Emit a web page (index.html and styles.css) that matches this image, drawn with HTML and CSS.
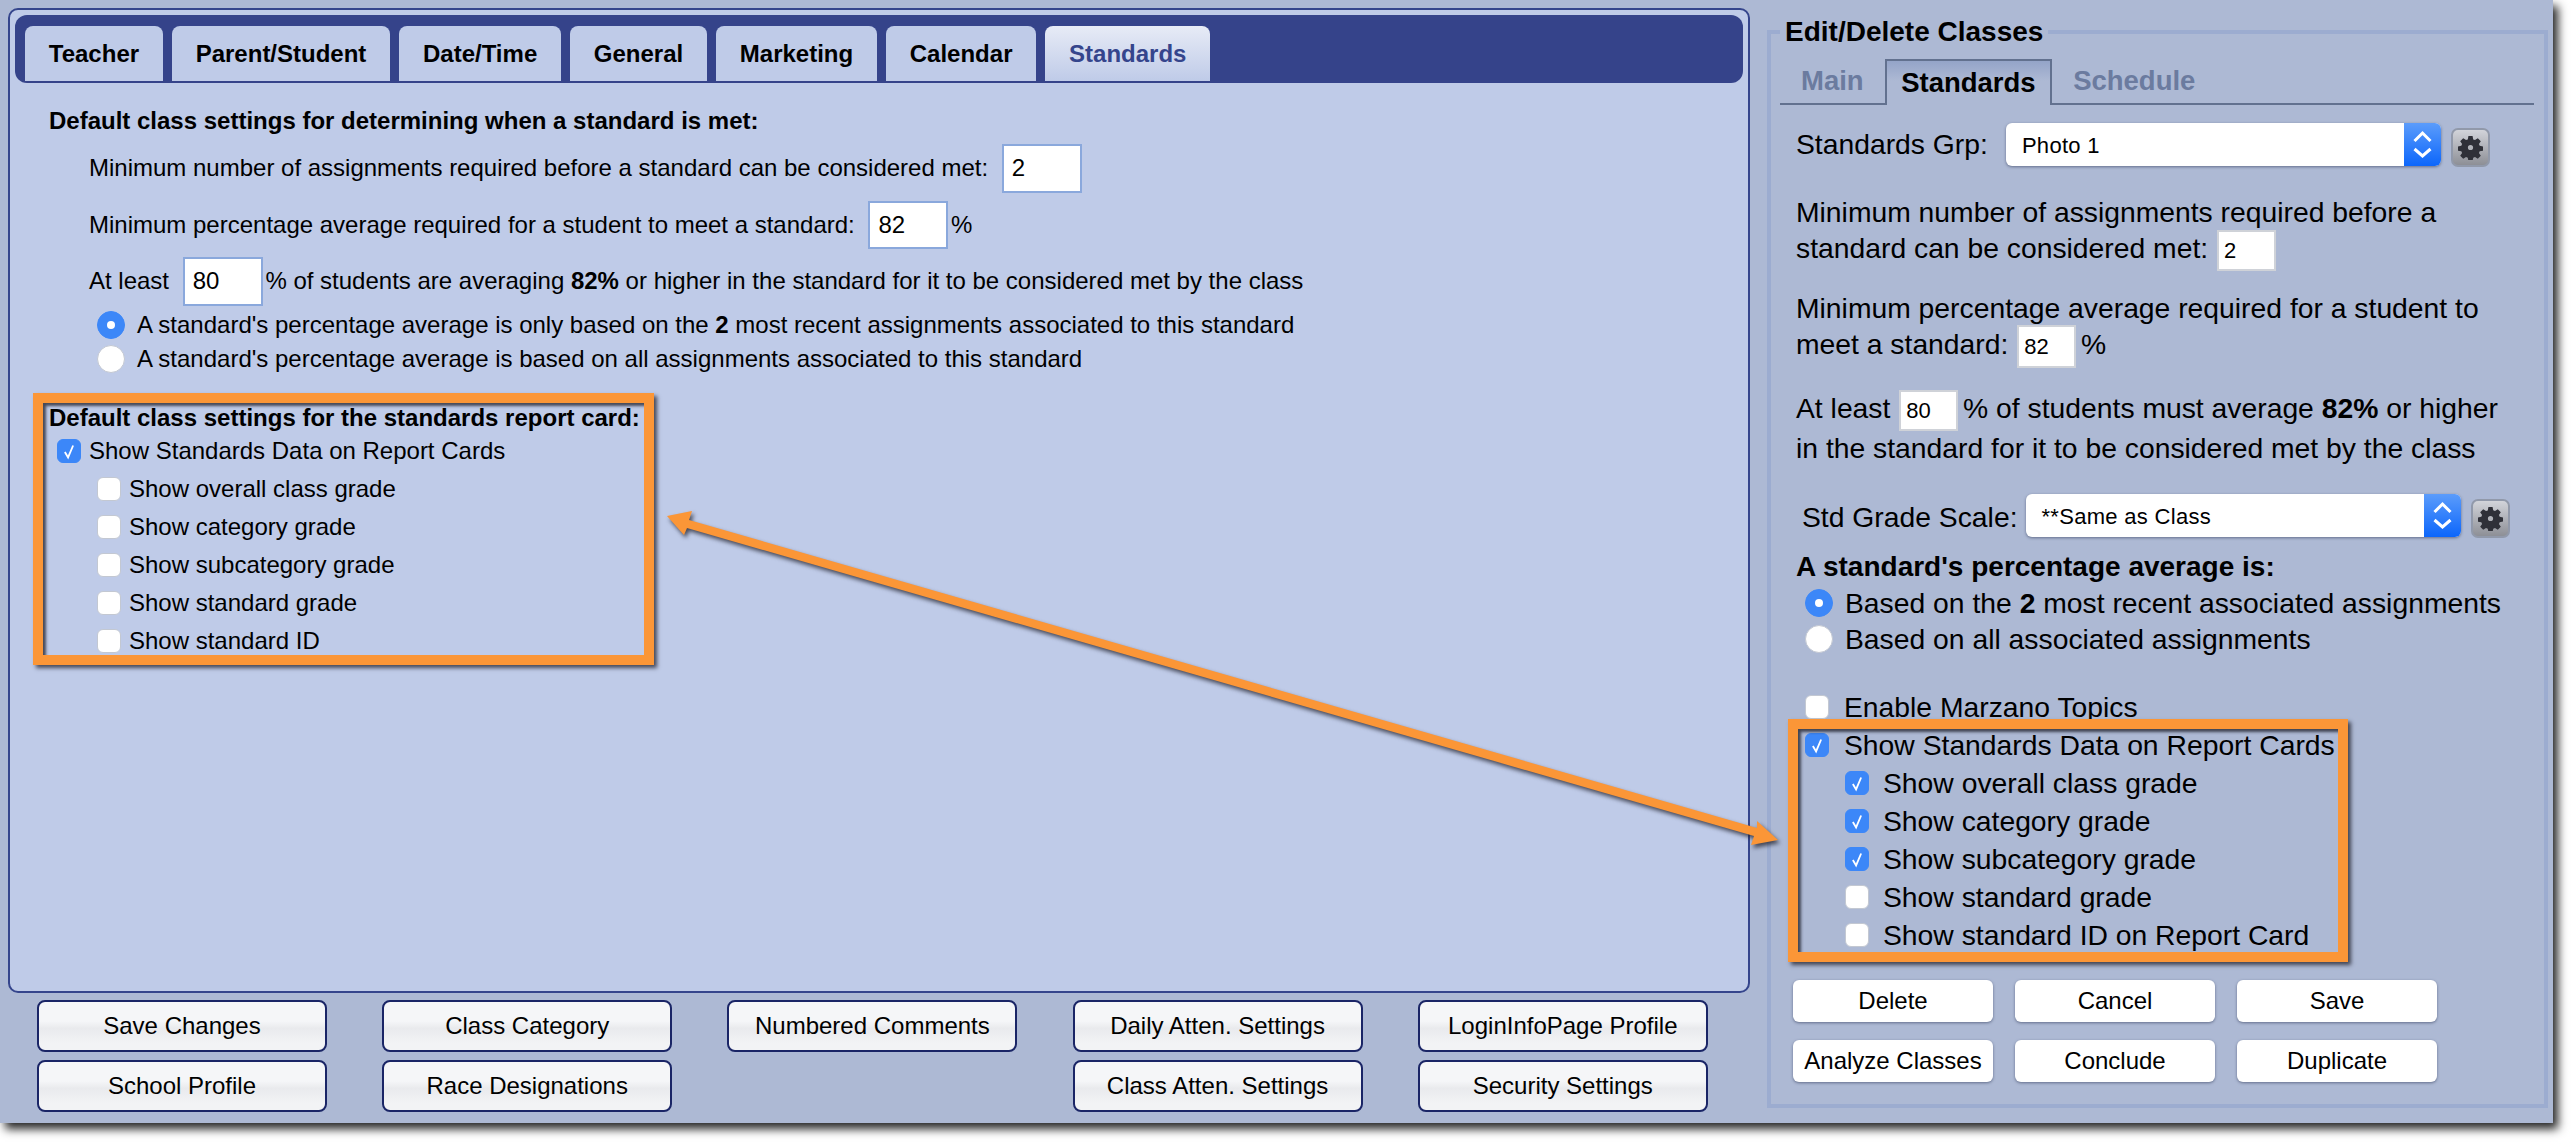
FILE: index.html
```html
<!DOCTYPE html>
<html lang="en">
<head>
<meta charset="utf-8">
<title>Standards settings</title>
<link rel="stylesheet" href="styles.css">
</head>
<body>
<div class="window">
  <div class="left-col">
    <section class="panel">
      <nav class="tabbar">
        <span class="tab">Teacher</span>
        <span class="tab">Parent/Student</span>
        <span class="tab">Date/Time</span>
        <span class="tab">General</span>
        <span class="tab">Marketing</span>
        <span class="tab">Calendar</span>
        <span class="tab tab-active">Standards</span>
      </nav>
      <div class="settings">
        <h3 class="heading">Default class settings for determining when a standard is met:</h3>
        <div class="met-row">Minimum number of assignments required before a standard can be considered met: <input class="num" value="2"></div>
        <div class="met-row">Minimum percentage average required for a student to meet a standard: <input class="num" value="82"> %</div>
        <div class="met-row">At least <input class="num" value="80"> % of students are averaging <b>82%</b> or higher in the standard for it to be considered met by the class</div>
        <div class="radio-row first"><span class="radio on"></span>A standard's percentage average is only based on the <b>2</b> most recent assignments associated to this standard</div>
        <div class="radio-row"><span class="radio"></span>A standard's percentage average is based on all assignments associated to this standard</div>
        <div class="report">
          <h3 class="heading">Default class settings for the standards report card:</h3>
          <div class="checks">
            <div class="check-row"><span class="check on"><svg viewBox="0 0 24 24"><path d="M7.500 13 L11 19 L16.500 6"/></svg></span>Show Standards Data on Report Cards</div>
            <div class="check-row sub"><span class="check"></span>Show overall class grade</div>
            <div class="check-row sub"><span class="check"></span>Show category grade</div>
            <div class="check-row sub"><span class="check"></span>Show subcategory grade</div>
            <div class="check-row sub"><span class="check"></span>Show standard grade</div>
            <div class="check-row sub"><span class="check"></span>Show standard ID</div>
          </div>
        </div>
      </div>
    </section>
    <div class="actions">
      <button class="action">Save Changes</button>
      <button class="action">Class Category</button>
      <button class="action">Numbered Comments</button>
      <button class="action">Daily Atten. Settings</button>
      <button class="action">LoginInfoPage Profile</button>
      <button class="action">School Profile</button>
      <button class="action">Race Designations</button>
      <span></span>
      <button class="action">Class Atten. Settings</button>
      <button class="action">Security Settings</button>
    </div>
  </div>

  <fieldset class="editor">
    <legend>Edit/Delete Classes</legend>
    <nav class="subtabs">
      <span class="subtab">Main</span>
      <span class="subtab subtab-active">Standards</span>
      <span class="subtab">Schedule</span>
    </nav>
    <div class="editor-body">
      <div class="select-row">
        <span class="select-label">Standards Grp:</span>
        <div class="select grp"><span class="select-text">Photo 1</span><span class="stepper"><svg viewBox="0 0 37 43"><path d="M10.500 18 L18.500 10 L26.500 18 M10.500 26 L18.500 33 L26.500 26"/></svg></span></div>
        <span class="gear"><svg viewBox="0 0 24 24"><path d="M10 1h4l.6 3.200 1.700.7 2.700-1.800 2.900 2.900-1.800 2.700.7 1.700 3.200.6v4l-3.200.6-.7 1.700 1.800 2.700-2.900 2.900-2.700-1.800-1.700.7-.6 3.200h-4l-.6-3.200-1.700-.7-2.700 1.800-2.900-2.900 1.800-2.700-.7-1.700-3.200-.6v-4l3.200-.6.7-1.700-1.800-2.700 2.900-2.900 2.700 1.800 1.700-.7z M12 9.500a2.500 2.500 0 1 0 0 5 2.500 2.500 0 1 0 0-5z" fill-rule="evenodd"/></svg></span>
      </div>
      <p class="para p1">Minimum number of assignments required before a standard can be considered met: <input class="mini" value="2"></p>
      <p class="para p2">Minimum percentage average required for a student to meet a standard: <input class="mini tall" value="82"> %</p>
      <p class="para p3">At least <input class="mini" value="80"> % of students must average <b>82%</b> or higher in the standard for it to be considered met by the class</p>
      <div class="select-row scale">
        <span class="select-label">Std Grade Scale:</span>
        <div class="select std"><span class="select-text">**Same as Class</span><span class="stepper"><svg viewBox="0 0 37 43"><path d="M10.500 18 L18.500 10 L26.500 18 M10.500 26 L18.500 33 L26.500 26"/></svg></span></div>
        <span class="gear"><svg viewBox="0 0 24 24"><path d="M10 1h4l.6 3.200 1.700.7 2.700-1.800 2.900 2.900-1.800 2.700.7 1.700 3.200.6v4l-3.200.6-.7 1.700 1.800 2.700-2.900 2.900-2.700-1.800-1.700.7-.6 3.200h-4l-.6-3.200-1.700-.7-2.700 1.800-2.900-2.900 1.800-2.700-.7-1.700-3.200-.6v-4l3.200-.6.7-1.700-1.800-2.700 2.900-2.900 2.700 1.800 1.700-.7z M12 9.500a2.500 2.500 0 1 0 0 5 2.500 2.500 0 1 0 0-5z" fill-rule="evenodd"/></svg></span>
      </div>
      <h3 class="avg-heading">A standard's percentage average is:</h3>
      <div class="avg-row"><span class="radio on"></span>Based on the <b>2</b> most recent associated assignments</div>
      <div class="avg-row"><span class="radio"></span>Based on all associated assignments</div>
      <div class="checks editor-checks">
        <div class="check-row"><span class="check"></span>Enable Marzano Topics</div>
        <div class="check-row"><span class="check on"><svg viewBox="0 0 24 24"><path d="M7.500 13 L11 19 L16.500 6"/></svg></span>Show Standards Data on Report Cards</div>
        <div class="check-row sub"><span class="check on"><svg viewBox="0 0 24 24"><path d="M7.500 13 L11 19 L16.500 6"/></svg></span>Show overall class grade</div>
        <div class="check-row sub"><span class="check on"><svg viewBox="0 0 24 24"><path d="M7.500 13 L11 19 L16.500 6"/></svg></span>Show category grade</div>
        <div class="check-row sub"><span class="check on"><svg viewBox="0 0 24 24"><path d="M7.500 13 L11 19 L16.500 6"/></svg></span>Show subcategory grade</div>
        <div class="check-row sub"><span class="check"></span>Show standard grade</div>
        <div class="check-row sub"><span class="check"></span>Show standard ID on Report Card</div>
      </div>
      <div class="editor-buttons">
        <button class="plain">Delete</button>
        <button class="plain">Cancel</button>
        <button class="plain">Save</button>
        <button class="plain">Analyze Classes</button>
        <button class="plain">Conclude</button>
        <button class="plain">Duplicate</button>
      </div>
    </div>
  </fieldset>

  <div class="frame frame-left"></div>
  <div class="frame frame-right"></div>
  <svg class="arrow" viewBox="0 0 2573 1143" aria-hidden="true">
    <polygon points="667,516 692,511 689,520 1757,828 1757,821 1778,840 1751,845 1754,836 687,528 684,535"/>
  </svg>
</div>
</body>
</html>
```
FILE: styles.css
```css
* { box-sizing: border-box; }
html, body { margin: 0; padding: 0; background: #fff; }
body {
  width: 2573px;
  height: 1143px;
  overflow: hidden;
  font-family: "Liberation Sans", Arial, sans-serif;
  color: #000;
}
.window {
  position: relative;
  display: flex;
  align-items: flex-start;
  width: 2553px;
  height: 1123px;
  background: #adb9d4;
  box-shadow: 5px 6px 9px rgba(0, 0, 0, .85);
}
.left-col {
  width: 1750px;
  padding: 8px 0 0 8px;
  flex: none;
}
.panel {
  height: 985px;
  background: #bfcbe8;
  border: 2px solid #35458c;
  border-radius: 10px;
}
.tabbar {
  display: flex;
  gap: 9px;
  height: 68px;
  margin: 5px 5px 0;
  padding: 11px 10px 2px;
  background: #35438a;
  border-radius: 12px;
}
.tab {
  padding: 0 23.800px;
  height: 55px;
  line-height: 55px;
  font-size: 24px;
  font-weight: 700;
  background: #bfcbe8;
  border-radius: 8px 8px 0 0;
}
.tab-active {
  color: #35458c;
  background: linear-gradient(#e7ebf6, #bfcbe8);
}
.settings {
  padding: 23px 0 0 39px;
  font-size: 24px;
}
.heading {
  margin: 0;
  height: 30px;
  line-height: 30px;
  font-size: 24px;
  font-weight: 700;
}
.met-row {
  display: flex;
  align-items: center;
  white-space: pre;
  height: 48.500px;
  margin: 8px 0 0 40px;
}
.met-row + .met-row { margin-top: 8px; }
.num {
  width: 80px;
  height: 100%;
  margin: 0 -4px 0 7px;
  padding: 0 8px;
  font: 24px "Liberation Sans", Arial, sans-serif;
  background: #fff;
  border: 2px solid #8aa8dc;
  border-radius: 0;
  outline: 0;
}
.radio-row {
  display: flex;
  align-items: center;
  white-space: pre;
  height: 28px;
  margin: 6px 0 0 48px;
}
.radio-row.first { margin-top: 5.500px; }
.radio {
  flex: none;
  position: relative;
  width: 28px;
  height: 28px;
  margin-right: 12px;
  background: #fff;
  border: 1px solid #c3c8d2;
  border-radius: 50%;
}
.radio.on {
  background: #3c87f8;
  border-color: #3c87f8;
}
.radio.on::after {
  content: "";
  position: absolute;
  left: 9px;
  top: 9px;
  width: 8px;
  height: 8px;
  background: #fff;
  border-radius: 50%;
}
.report { margin: 30px 0 0; }
.checks {
  display: flex;
  flex-direction: column;
  gap: 14px;
  margin-top: 6px;
}
.check-row {
  display: flex;
  align-items: center;
  height: 24px;
  padding-left: 8px;
  white-space: pre;
}
.check-row.sub { padding-left: 48px; }
.check {
  flex: none;
  width: 24px;
  height: 24px;
  margin-right: 8px;
  background: #fff;
  border: 1px solid #c3c8d2;
  border-radius: 6px;
}
.check.on {
  background: #3c87f8;
  border-color: #3c87f8;
}
.check svg {
  display: block;
  width: 22px;
  height: 22px;
  fill: none;
  stroke: #fff;
  stroke-width: 2;
}
.actions {
  display: grid;
  grid-template-columns: repeat(5, 290px);
  grid-auto-rows: 52px;
  column-gap: 55.200px;
  row-gap: 8px;
  margin: 7px 0 0 29px;
}
.action {
  font: 24px "Liberation Sans", Arial, sans-serif;
  color: #000;
  padding: 0;
  background: linear-gradient(#f5f6f8 0 40%, #e9eaed 55%, #f2f3f5 85%);
  border: 2px solid #1a2566;
  border-radius: 8px;
}
.editor {
  flex: none;
  width: 781px;
  height: 1092px;
  margin: 16px 0 0 17px;
  padding: 0;
  min-width: 0;
  border: 4px solid #9cacd0;
}
.editor legend {
  margin-left: 9px;
  padding: 0 5px;
  height: 32px;
  line-height: 32px;
  font-size: 28px;
  font-weight: 700;
}
.subtabs {
  display: flex;
  height: 46px;
  margin: 11px 10px 0 9px;
  border-bottom: 2px solid #62718f;
}
.subtab {
  padding: 0 21px;
  height: 46px;
  line-height: 44px;
  font-size: 27.500px;
  font-weight: 700;
  color: #6b7b9f;
}
.subtab-active {
  padding: 0 14.500px;
  color: #000;
  background: linear-gradient(#94a4c8, #adb9d4 45%);
  border: 2px solid #62718f;
  border-bottom: 0;
}
.editor-body {
  padding: 18px 0 0 22px;
  font-size: 28.300px;
}
.select-row {
  display: flex;
  align-items: center;
  height: 43px;
  margin-left: 3px;
}
.select-row.scale {
  margin: 26px 0 0 9px;
}
.select-label { margin-right: 18px; white-space: pre; }
.scale .select-label { margin-right: 8px; padding-top: 4px; }
.select {
  flex: none;
  display: flex;
  width: 435px;
  height: 43px;
  background: #fff;
  border-radius: 6px;
  box-shadow: 0 1px 3px rgba(50, 60, 90, .6);
  overflow: hidden;
}
.select-text {
  flex: 1;
  padding-left: 16px;
  font-size: 22px;
  letter-spacing: .3px;
  line-height: 45px;
}
.stepper {
  width: 37px;
  background: linear-gradient(#5b9cfb, #0c66fb);
}
.stepper svg {
  display: block;
  width: 37px;
  height: 43px;
  fill: none;
  stroke: #fff;
  stroke-width: 3;
}
.gear {
  flex: none;
  display: flex;
  align-items: center;
  justify-content: center;
  width: 39px;
  height: 39px;
  margin: 5px 0 0 10px;
  background: linear-gradient(#d2d4da, #8d8f96);
  border: 2px solid #9199aa;
  border-radius: 7px;
}
.gear svg {
  width: 25px;
  height: 25px;
  fill: #2f3038;
}
.para {
  margin: 0 0 0 3px;
  width: 724px;
  line-height: 36px;
}
.p1 { margin-top: 28px; }
.p2 { margin-top: 24px; }
.p3 { margin-top: 26px; line-height: 40px; }
.mini {
  width: 59px;
  height: 41px;
  margin: -8px -3px -8px 1px;
  padding: 0 5px;
  vertical-align: middle;
  font: 22px "Liberation Sans", Arial, sans-serif;
  background: #fff;
  border: 2px solid #cfd2d8;
  border-radius: 0;
  outline: 0;
}
.mini.tall { height: 43px; }
.avg-heading {
  margin: 12px 0 0 3px;
  height: 36px;
  line-height: 36px;
  font-size: 28px;
  font-weight: 700;
}
.avg-row {
  display: flex;
  align-items: center;
  height: 36px;
  margin-left: 12px;
  white-space: pre;
}
.editor-checks {
  margin-top: 38px;
}
.editor-checks .check-row {
  padding-left: 12px;
}
.editor-checks .check { margin-right: 15px; }
.editor-checks .check-row.sub { padding-left: 52px; }
.editor-checks .check-row.sub .check { margin-right: 14px; }
.editor-buttons {
  display: grid;
  grid-template-columns: repeat(3, 200px);
  grid-auto-rows: 42px;
  gap: 18px 22px;
  margin-top: 33px;
}
.plain {
  font: 24px "Liberation Sans", Arial, sans-serif;
  color: #000;
  padding: 0;
  background: #fff;
  border: 0;
  border-radius: 6px;
  box-shadow: 0 1px 3px rgba(50, 60, 90, .6);
}
.frame {
  position: absolute;
  border: 10px solid #fb9637;
  box-shadow: 3px 3px 4px rgba(30, 30, 40, .75), inset 3px 3px 3px rgba(30, 30, 40, .75);
  pointer-events: none;
}
.frame-left { left: 33px; top: 393px; width: 621px; height: 272px; }
.frame-right { left: 1788px; top: 719px; width: 560px; height: 243px; }
.arrow {
  position: absolute;
  left: 0;
  top: 0;
  width: 2573px;
  height: 1143px;
  pointer-events: none;
  filter: drop-shadow(2px 3px 2px rgba(30, 30, 40, .75));
}
.arrow polygon { fill: #fb9637; }
```
